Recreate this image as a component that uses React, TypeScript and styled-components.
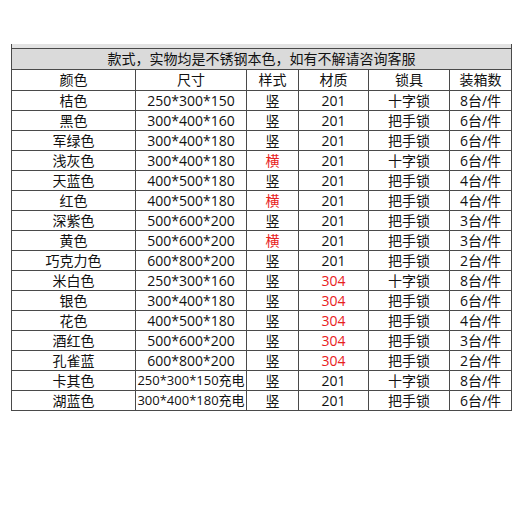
import styled, { createGlobalStyle } from 'styled-components';

const GlobalStyle = createGlobalStyle`
  html, body {
    margin: 0;
    padding: 0;
    background: #ffffff;
  }
  body {
    font-family: 'Open Sans', 'Noto Sans CJK SC', sans-serif;
    color: #111111;
  }
`;

const Page = styled.div`
  width: 520px;
  height: 520px;
  padding: 44px 0 0 11px;
  box-sizing: border-box;
`;

const Table = styled.table`
  width: 500px;
  border-collapse: collapse;
  table-layout: fixed;
  font-size: 14px;
`;

const Col = styled.col<{ w: number }>`
  width: ${(p) => p.w}px;
`;

const StripCell = styled.td`
  height: 4px;
  padding: 0;
  background: #e3e3e3;
  border-left: 1px solid #4a4a4a;
  border-right: 1px solid #4a4a4a;
  border-bottom: 1px solid #4a4a4a;
`;

const TitleCell = styled.td`
  height: 20px;
  padding: 0;
  line-height: 20px;
  text-align: center;
  background: #dadada;
  border: 1px solid #4a4a4a;
  white-space: nowrap;
`;

const HeadCell = styled.th`
  height: 20px;
  padding: 0;
  line-height: 20px;
  font-weight: 400;
  text-align: center;
  border: 1px solid #4a4a4a;
`;

const Cell = styled.td<{ red?: boolean; small?: boolean }>`
  height: 19px;
  padding: 0;
  line-height: 19px;
  text-align: center;
  white-space: nowrap;
  border: 1px solid #4a4a4a;
  color: ${(p) => (p.red ? '#e8211d' : '#111111')};
  font-size: ${(p) => (p.small ? '13px' : '14px')};
`;

const widths = [124, 111, 52, 70, 81, 62];
const heads = ['颜色', '尺寸', '样式', '材质', '锁具', '装箱数'];

type Row = {
  color: string;
  size: string;
  style: string;
  material: string;
  lock: string;
  pack: string;
};

const rows: Row[] = [
  { color: '桔色', size: '250*300*150', style: '竖', material: '201', lock: '十字锁', pack: '8台/件' },
  { color: '黑色', size: '300*400*160', style: '竖', material: '201', lock: '把手锁', pack: '6台/件' },
  { color: '军绿色', size: '300*400*180', style: '竖', material: '201', lock: '把手锁', pack: '6台/件' },
  { color: '浅灰色', size: '300*400*180', style: '横', material: '201', lock: '十字锁', pack: '6台/件' },
  { color: '天蓝色', size: '400*500*180', style: '竖', material: '201', lock: '把手锁', pack: '4台/件' },
  { color: '红色', size: '400*500*180', style: '横', material: '201', lock: '把手锁', pack: '4台/件' },
  { color: '深紫色', size: '500*600*200', style: '竖', material: '201', lock: '把手锁', pack: '3台/件' },
  { color: '黄色', size: '500*600*200', style: '横', material: '201', lock: '把手锁', pack: '3台/件' },
  { color: '巧克力色', size: '600*800*200', style: '竖', material: '201', lock: '把手锁', pack: '2台/件' },
  { color: '米白色', size: '250*300*160', style: '竖', material: '304', lock: '十字锁', pack: '8台/件' },
  { color: '银色', size: '300*400*180', style: '竖', material: '304', lock: '把手锁', pack: '6台/件' },
  { color: '花色', size: '400*500*180', style: '竖', material: '304', lock: '把手锁', pack: '4台/件' },
  { color: '酒红色', size: '500*600*200', style: '竖', material: '304', lock: '把手锁', pack: '3台/件' },
  { color: '孔雀蓝', size: '600*800*200', style: '竖', material: '304', lock: '把手锁', pack: '2台/件' },
  { color: '卡其色', size: '250*300*150充电', style: '竖', material: '201', lock: '十字锁', pack: '8台/件' },
  { color: '湖蓝色', size: '300*400*180充电', style: '竖', material: '201', lock: '把手锁', pack: '6台/件' },
];

function App() {
  return (
    <>
      <GlobalStyle />
      <Page>
        <Table>
          <colgroup>
            {widths.map((w, i) => (
              <Col key={i} w={w} />
            ))}
          </colgroup>
          <thead>
            <tr>
              <StripCell colSpan={6} />
            </tr>
            <tr>
              <TitleCell colSpan={6}>款式，实物均是不锈钢本色，如有不解请咨询客服</TitleCell>
            </tr>
            <tr>
              {heads.map((label) => (
                <HeadCell key={label}>{label}</HeadCell>
              ))}
            </tr>
          </thead>
          <tbody>
            {rows.map((r) => (
              <tr key={r.color}>
                <Cell>{r.color}</Cell>
                <Cell small={r.size.includes('充电')}>{r.size}</Cell>
                <Cell red={r.style === '横'}>{r.style}</Cell>
                <Cell red={r.material === '304'}>{r.material}</Cell>
                <Cell>{r.lock}</Cell>
                <Cell>{r.pack}</Cell>
              </tr>
            ))}
          </tbody>
        </Table>
      </Page>
    </>
  );
}

export default App;
